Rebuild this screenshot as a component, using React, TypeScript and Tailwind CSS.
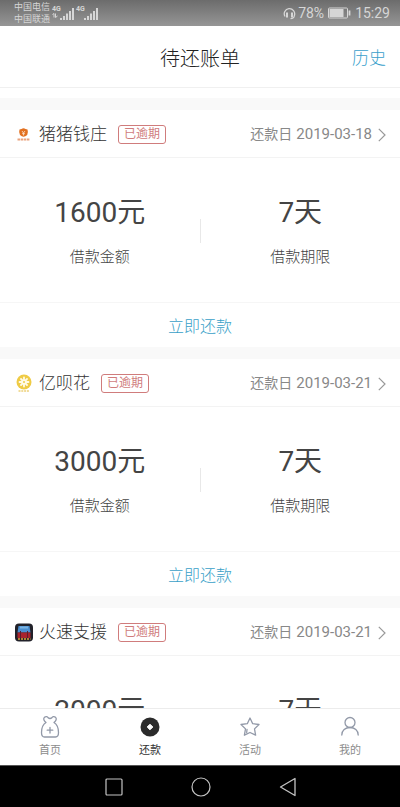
import type { ReactNode } from "react";

type Bill = {
  id: number;
  name: string;
  logo: ReactNode;
  dueDate: string;
  amount: number;
  days: number;
};

const bills: Bill[] = [
  { id: 1, name: "猪猪钱庄", logo: <PigLogo />, dueDate: "2019-03-18", amount: 1600, days: 7 },
  { id: 2, name: "亿呗花", logo: <FlowerLogo />, dueDate: "2019-03-21", amount: 3000, days: 7 },
  { id: 3, name: "火速支援", logo: <FireLogo />, dueDate: "2019-03-21", amount: 2000, days: 7 },
];

const tabs = [
  { label: "首页", icon: <BagIcon />, active: false },
  { label: "还款", icon: <CoinIcon />, active: true },
  { label: "活动", icon: <StarIcon />, active: false },
  { label: "我的", icon: <UserIcon />, active: false },
];

export default function App() {
  return (
    <div className="flex h-dvh flex-col overflow-hidden bg-white font-['Roboto','Noto_Sans_CJK_SC',sans-serif]">
      <StatusBar />

      <header className="grid h-[62px] shrink-0 grid-cols-[1fr_auto_1fr] items-center border-b border-[#f0f0f0] px-3.5 pt-1">
        <h1 className="col-start-2 text-xl font-light text-[#222]">待还账单</h1>
        <a href="#history" className="justify-self-end text-[17px] font-light text-[#3a9fcc]">
          历史
        </a>
      </header>

      <main className="min-h-0 flex-1 overflow-hidden pt-2.5">
        {bills.map((bill) => (
          <BillCard key={bill.id} bill={bill} />
        ))}
      </main>

      <nav className="grid h-[57px] shrink-0 grid-cols-4 border-t border-[#ececec] bg-white">
        {tabs.map((tab) => (
          <a
            key={tab.label}
            href="#tab"
            className={`flex flex-col items-center gap-1 pt-1.5 text-[11px] leading-4 ${tab.active ? "text-[#333]" : "text-[#8c8c8c]"}`}
          >
            {tab.icon}
            <span>{tab.label}</span>
          </a>
        ))}
      </nav>

      <SystemBar />
    </div>
  );
}

function BillCard({ bill }: { bill: Bill }) {
  return (
    <section className="border-t-12 border-[#f9f9f9]">
      <div className="flex h-12 items-center border-b border-[#f3f3f3] px-3.5 pt-0.5">
        {bill.logo}
        <h2 className="ml-1.5 text-[17px] font-light text-[#333]">{bill.name}</h2>
        <span className="ml-[11px] rounded-[3px] border border-[#d07c7c] px-[5px] text-xs leading-[17px] text-[#d07c7c]">
          已逾期
        </span>
        <a href="#detail" className="ml-auto flex items-center text-[#888]">
          <span className="flex items-baseline gap-1">
            <span className="text-sm">还款日</span>
            <time className="text-[15px]">{bill.dueDate}</time>
          </span>
          <svg className="ml-1.5" width="8" height="14" viewBox="0 0 8 14" fill="none" stroke="#999" strokeWidth="1.2">
            <path d="M.8 .8 7 7 .8 13.2" />
          </svg>
        </a>
      </div>

      <dl className="grid h-[145px] grid-cols-[1fr_1px_1fr] items-center border-b border-[#f6f6f6] pt-0.5">
        <Figure label="借款金额" value={`${bill.amount}元`} />
        <div className="h-6 bg-[#e8e8e8]" />
        <Figure label="借款期限" value={`${bill.days}天`} />
      </dl>

      <button type="button" className="block h-11 w-full pt-1 text-base font-light text-[#3a9fc8]">
        立即还款
      </button>
    </section>
  );
}

function Figure({ label, value }: { label: string; value: string }) {
  return (
    <div className="flex flex-col-reverse items-center gap-3">
      <dt className="text-[15px] leading-6 font-light text-[#444]">{label}</dt>
      <dd className="text-[28px] leading-10 text-[#444]">{value}</dd>
    </div>
  );
}

function StatusBar() {
  return (
    <div className="flex h-[26px] shrink-0 items-center justify-between bg-linear-to-b from-[#6c6c6c] to-[#969696] pr-2.5 pl-3.5 text-[#d6d6d6]">
      <div className="flex items-center gap-0.5">
        <div className="text-[9px] leading-3">
          <div>中国电信</div>
          <div>中国联通</div>
        </div>
        <Signal data />
        <Signal />
      </div>
      <div className="flex items-center text-sm">
        <svg width="13" height="14" viewBox="0 0 13 14" fill="none" stroke="currentColor" strokeWidth="1.3">
          <path d="M2 10.5A5.2 5.2 0 1 1 11.4 9.500Q11 12.700 7.500 12.700" />
          <path d="M4 6.500v5M9 6.500v5" strokeWidth="2" />
        </svg>
        <span className="ml-0.5">78%</span>
        <svg className="mx-1" width="23" height="12" viewBox="0 0 23 12" fill="none" stroke="currentColor">
          <rect x=".5" y="1" width="19" height="10" rx="1" />
          <rect x="1.500" y="2" width="14" height="8" fill="currentColor" stroke="none" />
          <path d="M21.500 3.500v5" strokeWidth="1.800" />
        </svg>
        <span>15:29</span>
      </div>
    </div>
  );
}

function Signal({ data = false }: { data?: boolean }) {
  return (
    <div className="flex items-end">
      <div className="h-4 w-2 text-[7px] leading-2 font-bold">
        4G
        {data && (
          <svg width="6" height="5" viewBox="0 0 6 5" fill="none" stroke="currentColor">
            <path d="M.5 1.500 2 .5v4M3.500.5v4L5.500 3" />
          </svg>
        )}
      </div>
      <svg width="14" height="14" viewBox="0 0 14 14" fill="currentColor">
        <path d="M0 11h2v2H0zM3 9h2v4H3zM6 6.500h2V13H6zM9 4h2v9H9zM12 1h2v12h-2z" />
      </svg>
    </div>
  );
}

function SystemBar() {
  return (
    <div className="flex h-[42px] shrink-0 items-center justify-center gap-[68px] border-t border-[#555] bg-black pl-0.5 text-[#c4c4c4]">
      <button type="button" aria-label="最近任务">
        <svg width="18" height="18" viewBox="0 0 18 18" fill="none" stroke="currentColor" strokeWidth="1.200">
          <rect x="1" y="1" width="16" height="16" rx="1" />
        </svg>
      </button>
      <button type="button" aria-label="主屏幕">
        <svg width="20" height="20" viewBox="0 0 20 20" fill="none" stroke="currentColor" strokeWidth="1.200">
          <circle cx="10" cy="10" r="9" />
        </svg>
      </button>
      <button type="button" aria-label="返回">
        <svg width="18" height="20" viewBox="0 0 18 20" fill="none" stroke="currentColor" strokeWidth="1.300" strokeLinejoin="round">
          <path d="M16 1.500v17L1.500 10z" />
        </svg>
      </button>
    </div>
  );
}

function PigLogo() {
  return (
    <svg width="19" height="19" viewBox="0 0 19 19">
      <path d="M5.500 4.500 7.500 4Q9.500 2.700 11.500 4l2 .5q1 3-.3 5.500Q9.500 13.500 6 10 4.500 7.500 5.500 4.500z" fill="#e2701f" />
      <path d="m8 6 1.500 2L11 6M9.500 8v2.500M8 8.700h3" stroke="#fbe3cf" strokeWidth=".8" fill="none" />
      <path d="M3.500 14.500h12.500" stroke="#e9a27c" strokeWidth="2" strokeDasharray="2.500 .6" />
    </svg>
  );
}

function FlowerLogo() {
  return (
    <svg width="19" height="19" viewBox="0 0 19 19">
      <circle cx="10" cy="8" r="7.500" fill="#efcb45" />
      <g stroke="#fffbe8" strokeWidth="1.800" strokeLinecap="round">
        <path d="M10 3.500v9M5.500 8h9M7 5l6 6M13 5l-6 6" />
      </g>
      <circle cx="10" cy="8" r="1" fill="#efcb45" />
      <path d="M4.500 17h10.500" stroke="#f1dc9a" strokeWidth="2" strokeDasharray="2 .8" />
    </svg>
  );
}

function FireLogo() {
  return (
    <svg width="19" height="19" viewBox="0 0 19 19">
      <rect x="1" y=".5" width="18" height="18" rx="4" fill="#22222a" />
      <path d="M4.500 3h11l1 6.500h-13z" fill="#4b8fd0" />
      <path d="M6 3.500h8v2H6z" fill="#7ab4e4" />
      <path d="M3.500 9.500h13V15h-13z" fill="#a8232c" />
      <path d="M6.500 8v7M13.500 8v7" stroke="#5d1c2c" />
      <path d="M4 16h12.500" stroke="#d9a63a" strokeWidth="1.500" strokeDasharray="2 1" />
    </svg>
  );
}

function BagIcon() {
  return (
    <svg width="24" height="24" viewBox="0 0 24 24" fill="none" stroke="#9299a8" strokeWidth="1.300" strokeLinejoin="round" strokeLinecap="round">
      <path d="M8 7.500C5.800 5.500 5 3.700 6.500 2.300c1.500-1.200 3-.6 3.700.5.900.9 2.700.9 3.600 0 .7-1.100 2.200-1.700 3.700-.5 1.500 1.400.7 3.200-1.500 5.200 3.200 2 4.500 5.500 4.500 10 0 3-1 4.500-3 4.500h-11c-2 0-3-1.500-3-4.500 0-4.500 1.300-8 4.500-10z" />
      <path d="M12 12.500v5.500M9.200 15.200h5.600" />
    </svg>
  );
}

function CoinIcon() {
  return (
    <svg width="24" height="24" viewBox="0 0 24 24">
      <circle cx="12" cy="12" r="9.500" fill="#2b2b2b" />
      <path d="m12 9.200 2.800 2.800-2.800 2.800L9.200 12z" fill="#fff" stroke="#fff" strokeLinejoin="round" />
    </svg>
  );
}

function StarIcon() {
  return (
    <svg width="24" height="24" viewBox="0 0 24 24" fill="none" stroke="#9299a8" strokeWidth="1.300" strokeLinejoin="round" strokeLinecap="round">
      <path d="m12 3 2.700 5.700 6.300.8-4.500 4.400 1.100 6.300L12 17.500l-5.600 2.700 1.100-6.300L3 9.500l6.300-.8z" />
      <path d="m9 14.500-.3 3" />
    </svg>
  );
}

function UserIcon() {
  return (
    <svg width="24" height="24" viewBox="0 0 24 24" fill="none" stroke="#9299a8" strokeWidth="1.300" strokeLinecap="round">
      <circle cx="12" cy="7.500" r="5" />
      <path d="M3.800 20c0-4.500 3.500-7.500 8.200-7.500s8.200 3 8.200 7.500" />
    </svg>
  );
}
